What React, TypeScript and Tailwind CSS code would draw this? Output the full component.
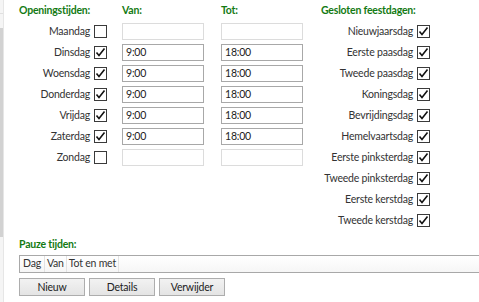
const days = [
  { name: "Maandag", on: false, van: "", tot: "" },
  { name: "Dinsdag", on: true, van: "9:00", tot: "18:00" },
  { name: "Woensdag", on: true, van: "9:00", tot: "18:00" },
  { name: "Donderdag", on: true, van: "9:00", tot: "18:00" },
  { name: "Vrijdag", on: true, van: "9:00", tot: "18:00" },
  { name: "Zaterdag", on: true, van: "9:00", tot: "18:00" },
  { name: "Zondag", on: false, van: "", tot: "" },
];

const holidays = [
  "Nieuwjaarsdag",
  "Eerste paasdag",
  "Tweede paasdag",
  "Koningsdag",
  "Bevrijdingsdag",
  "Hemelvaartsdag",
  "Eerste pinksterdag",
  "Tweede pinksterdag",
  "Eerste kerstdag",
  "Tweede kerstdag",
];

function Check({ on }: { on: boolean }) {
  return (
    <span className="w-[13px] h-[13px] border border-[#3a3a3a] bg-white flex items-center justify-center shrink-0">
      {on && (
        <svg width="11" height="11" viewBox="0 0 11 11">
          <path d="M1.5 5.5 L4 8.5 L9.5 1.5" fill="none" stroke="#111" strokeWidth="1.6" />
        </svg>
      )}
    </span>
  );
}

function Field({ value, enabled }: { value: string; enabled: boolean }) {
  return (
    <div
      className={`w-[82px] h-[17px] border bg-white px-[3px] leading-[15px] text-[#222] ${
        enabled ? "border-[#a8a8a8]" : "border-[#dcdcdc]"
      }`}
    >
      {value}
    </div>
  );
}

function Btn({ label }: { label: string }) {
  return (
    <button className="w-[66px] h-[18px] border border-[#adadad] bg-gradient-to-b from-[#f2f2f2] to-[#e4e4e4] text-[#222] leading-[16px]">
      {label}
    </button>
  );
}

export default function App() {
  return (
    <div
      className="w-[479px] h-[302px] bg-white flex overflow-hidden text-[10.5px] tracking-[-0.2px] text-[#333]"
      style={{ fontFamily: "Lato, 'Open Sans', sans-serif" }}
    >
      <div className="w-[4px] flex flex-col border-r border-[#e6e6e6]">
        <div className="h-[14px] bg-[#f5f5f5] border-b border-[#e0e0e0]" />
        <div className="h-[14px] bg-[#f5f5f5]" />
        <div className="h-[209px] bg-[#d2d2d2]" />
        <div className="flex-1 bg-[#f5f5f5]" />
      </div>
      <div className="flex-1 pl-[15px] flex flex-col">
        <div className="flex">
          <div className="w-[103px] flex flex-col">
            <div className="h-[21px] flex items-center font-bold text-[#137a13]">Openingstijden:</div>
            {days.map((d) => (
              <div key={d.name} className="h-[21px] flex items-center justify-end pr-[15px] gap-[4px]">
                <span>{d.name}</span>
                <Check on={d.on} />
              </div>
            ))}
          </div>
          <div className="w-[99px] flex flex-col">
            <div className="h-[21px] flex items-center font-bold text-[#137a13]">Van:</div>
            {days.map((d) => (
              <div key={d.name} className="h-[21px] flex items-center">
                <Field value={d.van} enabled={d.on} />
              </div>
            ))}
          </div>
          <div className="w-[100px] flex flex-col">
            <div className="h-[21px] flex items-center font-bold text-[#137a13]">Tot:</div>
            {days.map((d) => (
              <div key={d.name} className="h-[21px] flex items-center">
                <Field value={d.tot} enabled={d.on} />
              </div>
            ))}
          </div>
          <div className="w-[109px] flex flex-col">
            <div className="h-[21px] flex items-center font-bold text-[#137a13] whitespace-nowrap">
              Gesloten feestdagen:
            </div>
            {holidays.map((h) => (
              <div key={h} className="h-[21px] flex items-center justify-end gap-[4px]">
                <span className="whitespace-nowrap">{h}</span>
                <Check on />
              </div>
            ))}
          </div>
        </div>
        <div className="h-[24px] pt-[4px] flex items-center font-bold text-[#137a13]">Pauze tijden:</div>
        <div className="h-[18px] border border-[#a8a8a8] border-r-0 flex bg-gradient-to-b from-white to-[#f6f6f6]">
          <span className="px-[3px] border-r border-[#e2e2e2] leading-[15px]">Dag</span>
          <span className="px-[2px] border-r border-[#e2e2e2] leading-[15px]">Van</span>
          <span className="px-[2px] border-r border-[#e2e2e2] leading-[15px]">Tot en met</span>
        </div>
        <div className="flex gap-[4px] mt-[5px]">
          <Btn label="Nieuw" />
          <Btn label="Details" />
          <Btn label="Verwijder" />
        </div>
      </div>
    </div>
  );
}
